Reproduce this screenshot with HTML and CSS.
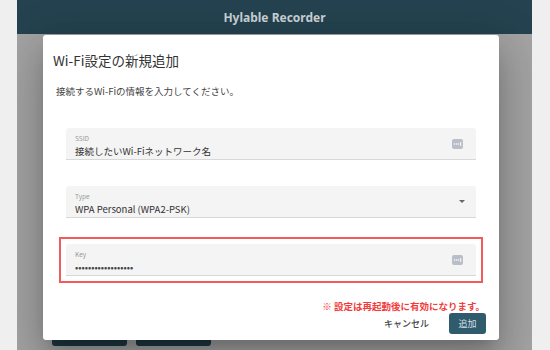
FILE: index.html
```html
<!DOCTYPE html>
<html lang="ja">
<head>
    <meta charset="UTF-8">
    <meta name="viewport" content="width=device-width, initial-scale=1.0">
    <title>Hylable Recorder</title>
    <link rel="stylesheet" href="styles.css">
</head>
<body>

<div class="app">
    <header class="app-bar">Hylable Recorder</header>

    <main class="main">
        <div class="main-actions">
            <button class="main-button"></button>
            <button class="main-button"></button>
        </div>
    </main>

    <div class="backdrop"></div>

    <div class="dialog">
        <h2 class="dialog-title">Wi-Fi設定の新規追加</h2>
        <p class="dialog-text">接続するWi-Fiの情報を入力してください。</p>

        <div class="form">
            <div class="field-wrap">
                <div class="field">
                    <span class="field-label">SSID</span>
                    <span class="field-value">接続したいWi-Fiネットワーク名</span>
                    <svg class="field-icon" width="11" height="10" viewBox="0 0 11 10">
                        <rect x="0" y="0" width="11" height="10" rx="2" fill="#b9bec7"/>
                        <circle cx="2.6" cy="5" r="0.8" fill="#fff"/>
                        <circle cx="4.6" cy="5" r="0.8" fill="#fff"/>
                        <circle cx="6.6" cy="5" r="0.8" fill="#fff"/>
                        <rect x="8.3" y="3" width="0.9" height="4" fill="#fff"/>
                    </svg>
                </div>
            </div>

            <div class="field-wrap">
                <div class="field">
                    <span class="field-label">Type</span>
                    <span class="field-value">WPA Personal (WPA2-PSK)</span>
                    <svg class="field-arrow" width="6" height="3" viewBox="0 0 6 3">
                        <polygon points="0,0 6,0 3,3" fill="#666"/>
                    </svg>
                </div>
            </div>

            <div class="field-wrap highlight">
                <div class="field">
                    <span class="field-label">Key</span>
                    <span class="field-value password">••••••••••••••••••</span>
                    <svg class="field-icon" width="11" height="10" viewBox="0 0 11 10">
                        <rect x="0" y="0" width="11" height="10" rx="2" fill="#b9bec7"/>
                        <circle cx="2.6" cy="5" r="0.8" fill="#fff"/>
                        <circle cx="4.6" cy="5" r="0.8" fill="#fff"/>
                        <circle cx="6.6" cy="5" r="0.8" fill="#fff"/>
                        <rect x="8.3" y="3" width="0.9" height="4" fill="#fff"/>
                    </svg>
                </div>
            </div>
        </div>

        <p class="note">※ 設定は再起動後に有効になります。</p>

        <div class="dialog-actions">
            <button class="btn-text">キャンセル</button>
            <button class="btn-primary">追加</button>
        </div>
    </div>
</div>

</body>
</html>
```

FILE: styles.css
```css
body {
    margin: 0;
    background-color: #efefef;
    font-family: "Noto Sans CJK JP", "Noto Sans", sans-serif;
    color: #333;
}

.app {
    position: relative;
    margin-left: 17px;
    width: 515px;
    height: 350px;
    display: flex;
    flex-direction: column;
    background-color: #fff;
    overflow: hidden;
}

.app-bar {
    height: 34px;
    flex-shrink: 0;
    display: flex;
    align-items: center;
    justify-content: center;
    background-color: #24424f;
    color: #c9d1d5;
    font-family: "Noto Sans", sans-serif;
    font-weight: bold;
    font-size: 12px;
}

.main {
    flex: 1;
    display: flex;
    flex-direction: column;
    justify-content: flex-end;
}

.main-actions {
    display: flex;
    gap: 9px;
    padding-left: 35px;
    margin-bottom: 4px;
}

.main-button {
    width: 75px;
    height: 30px;
    border: none;
    border-radius: 3px;
    background-color: #30596a;
}

.backdrop {
    position: absolute;
    top: 34px;
    left: 0;
    right: 0;
    bottom: 0;
    background-color: rgba(0, 0, 0, 0.36);
}

.dialog {
    position: absolute;
    top: 35px;
    left: 26px;
    width: 456px;
    height: 305px;
    box-sizing: border-box;
    padding-top: 15px;
    background-color: #fff;
    border-radius: 3px;
    box-shadow: 0 11px 15px -7px rgba(0, 0, 0, 0.2),
                0 24px 38px 3px rgba(0, 0, 0, 0.14),
                0 9px 46px 8px rgba(0, 0, 0, 0.12);
    display: flex;
    flex-direction: column;
}

.dialog-title {
    margin: 0 0 0 10px;
    font-size: 13.5px;
    font-weight: normal;
    line-height: 20px;
    color: #333;
}

.dialog-text {
    margin: 14px 0 0 13px;
    font-size: 9.5px;
    line-height: 14px;
    color: #444;
}

.form {
    margin-top: 23px;
    padding: 0 16px;
    display: flex;
    flex-direction: column;
    gap: 12px;
}

.field-wrap {
    padding: 7px;
}

.field-wrap.highlight {
    padding: 5px;
    border: 2px solid #f35a5a;
}

.field {
    position: relative;
    height: 32px;
    box-sizing: border-box;
    padding: 6px 9px 0;
    background-color: #f4f4f4;
    border-bottom: 1px solid #d8d8d8;
    border-radius: 3px 3px 0 0;
    display: flex;
    flex-direction: column;
}

.field-label {
    font-size: 6.5px;
    line-height: 9px;
    color: #9a9a9a;
}

.field-value {
    margin-top: 1px;
    font-size: 9.5px;
    line-height: 14px;
    color: #333;
}

.field-value.password {
    color: #444;
}

.field-icon {
    position: absolute;
    right: 13px;
    top: 11px;
}

.field-arrow {
    position: absolute;
    right: 11px;
    top: 14px;
}

.note {
    margin: 16px 14px 0 0;
    text-align: right;
    font-size: 9.5px;
    line-height: 14px;
    font-weight: bold;
    color: #f23c3c;
}

.dialog-actions {
    display: flex;
    justify-content: flex-end;
    align-items: center;
    gap: 10px;
    padding-right: 13px;
}

.btn-text {
    border: none;
    background: none;
    padding: 0 10px;
    height: 21px;
    font-family: inherit;
    font-size: 9px;
    font-weight: 500;
    color: #444;
}

.btn-primary {
    border: none;
    border-radius: 3px;
    background-color: #2f5b6c;
    width: 37px;
    height: 21px;
    font-family: inherit;
    font-size: 9px;
    color: #d3dfe4;
}
```
